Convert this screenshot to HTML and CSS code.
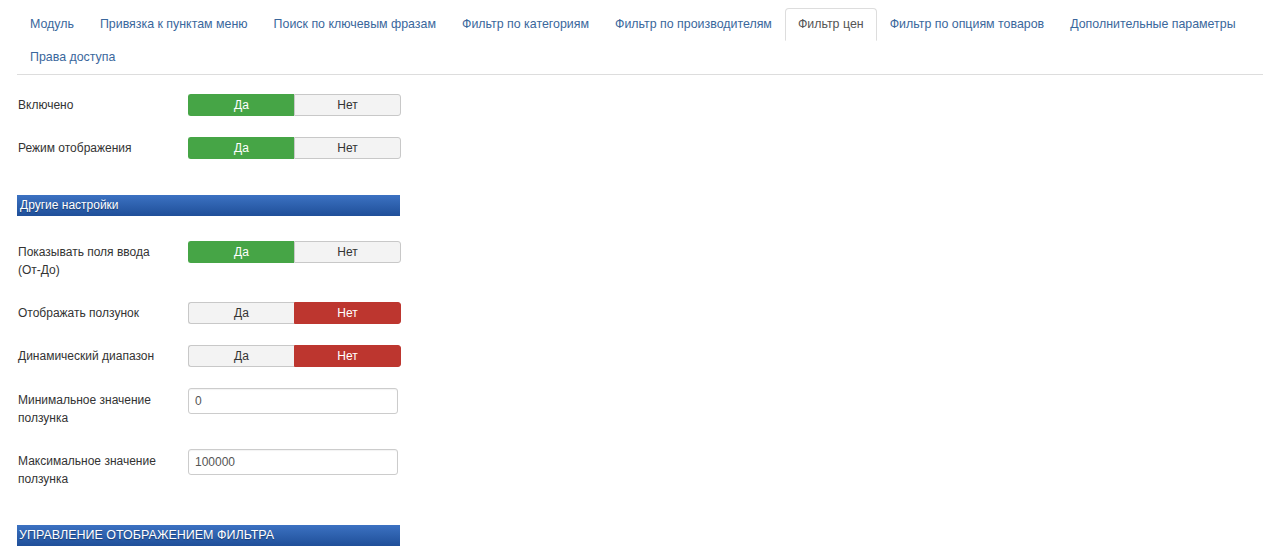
FILE: index.html
```html
<!DOCTYPE html>
<html lang="ru">

<head>
  <meta charset="UTF-8" />
  <meta name="viewport" content="width=device-width, initial-scale=1.0" />
  <title>Фильтр цен</title>
  <link rel="stylesheet" href="styles.css">
</head>

<body>
  <div class="page">
    <ul class="nav-tabs">
      <li><a href="#">Модуль</a></li>
      <li><a href="#">Привязка к пунктам меню</a></li>
      <li><a href="#">Поиск по ключевым фразам</a></li>
      <li><a href="#">Фильтр по категориям</a></li>
      <li><a href="#">Фильтр по производителям</a></li>
      <li class="active"><a href="#">Фильтр цен</a></li>
      <li><a href="#">Фильтр по опциям товаров</a></li>
      <li><a href="#">Дополнительные параметры</a></li>
      <li><a href="#">Права доступа</a></li>
    </ul>

    <div class="tab-content">
      <div class="control-group">
        <div class="control-label">Включено</div>
        <div class="btn-group">
          <span class="btn yes">Да</span>
          <span class="btn">Нет</span>
        </div>
      </div>

      <div class="control-group">
        <div class="control-label">Режим отображения</div>
        <div class="btn-group">
          <span class="btn yes">Да</span>
          <span class="btn">Нет</span>
        </div>
      </div>

      <div class="section-title">Другие настройки</div>

      <div class="control-group">
        <div class="control-label">Показывать поля ввода (От-До)</div>
        <div class="btn-group">
          <span class="btn yes">Да</span>
          <span class="btn">Нет</span>
        </div>
      </div>

      <div class="control-group">
        <div class="control-label">Отображать ползунок</div>
        <div class="btn-group">
          <span class="btn">Да</span>
          <span class="btn no">Нет</span>
        </div>
      </div>

      <div class="control-group">
        <div class="control-label">Динамический диапазон</div>
        <div class="btn-group">
          <span class="btn">Да</span>
          <span class="btn no">Нет</span>
        </div>
      </div>

      <div class="control-group">
        <div class="control-label text">Минимальное значение ползунка</div>
        <input type="text" value="0" />
      </div>

      <div class="control-group">
        <div class="control-label text">Максимальное значение ползунка</div>
        <input type="text" value="100000" />
      </div>

      <div class="section-title big">УПРАВЛЕНИЕ ОТОБРАЖЕНИЕМ ФИЛЬТРА</div>
    </div>
  </div>
</body>

</html>
```

FILE: styles.css
```css
/* Base resets & typography */
* {
  box-sizing: border-box;
  margin: 0;
  padding: 0;
}

body {
  font-family: "Liberation Sans", Arial, sans-serif;
  font-size: 12px;
  line-height: 18px;
  color: #333;
  background-color: #fff;
}

.page {
  padding: 8px 17px 0 17px;
}

/* Tabs */
.nav-tabs {
  list-style: none;
  display: flex;
  flex-wrap: wrap;
  border-bottom: 1px solid #ddd;
}

.nav-tabs a {
  display: block;
  padding: 7px 12px;
  line-height: 17px;
  font-size: 12.4px;
  color: #3a679c;
  text-decoration: none;
  border: 1px solid transparent;
  border-radius: 4px 4px 0 0;
}

.nav-tabs .active a {
  color: #555;
  border-color: #ddd #ddd transparent;
  background-color: #fff;
}

/* Form rows */
.tab-content {
  padding-top: 19px;
  padding-left: 1px;
}

.control-group {
  display: flex;
  align-items: flex-start;
  margin-bottom: 21px;
}

.control-label {
  width: 170px;
  flex-shrink: 0;
  padding: 2px 20px 2px 0;
}

.control-label.text {
  padding-top: 3px;
  padding-bottom: 1px;
}

.btn-group {
  display: flex;
  width: 213px;
}

.btn {
  flex: 1;
  height: 22px;
  line-height: 20px;
  text-align: center;
  background-color: #f3f3f3;
  border: 1px solid #c8c8c8;
  color: #333;
}

.btn:first-child {
  border-radius: 3px 0 0 3px;
  border-right: none;
}

.btn:last-child {
  border-radius: 0 3px 3px 0;
}

.btn.yes {
  background-color: #46a546;
  border-color: #46a546;
  color: #fff;
}

.btn.no {
  background-color: #bd362f;
  border-color: #bd362f;
  color: #fff;
}

input[type=text] {
  width: 210px;
  height: 26px;
  padding: 4px 6px;
  border: 1px solid #ccc;
  border-radius: 3px;
  font-family: inherit;
  font-size: 12px;
  color: #555;
  box-shadow: inset 0 1px 1px rgba(0, 0, 0, 0.05);
}

/* Section headers */
.section-title {
  margin: 36px 0 25px -1px;
  width: 383px;
  height: 21px;
  padding-left: 3px;
  line-height: 21px;
  color: #fff;
  text-shadow: 0 1px 1px rgba(0, 0, 0, 0.35);
  background: linear-gradient(to bottom, #3c72c2, #1f4f99);
}

.section-title.big {
  margin-top: 36px;
  padding-left: 2px;
  font-size: 12.5px;
}
```
